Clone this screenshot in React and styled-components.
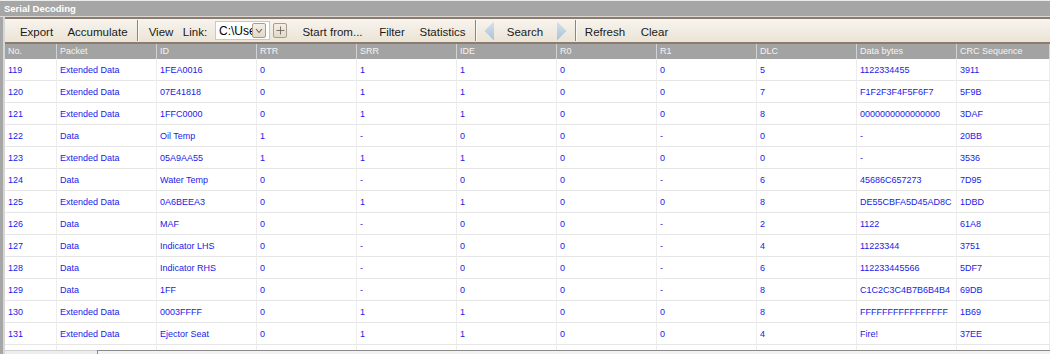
import React from 'react';
import styled, { createGlobalStyle } from 'styled-components';

const GlobalStyle = createGlobalStyle`
  html, body { margin: 0; padding: 0; }
  body { background: #a8a8a8; font-family: "Liberation Sans", Arial, sans-serif; }
`

const Frame = styled.div`
  width: 1050px;
  height: 354px;
  display: flex;
  flex-direction: column;
  overflow: hidden;
  background: #a6a6a6;
  border-top: 1px solid #ececec;
  box-sizing: border-box;
`

const TitleBar = styled.div`
  height: 15px;
  flex: none;
  display: flex;
  align-items: center;
  padding-left: 4px;
  color: #fff;
  font-size: 9.5px;
  font-weight: bold;
  border-bottom: 1px solid #dcd8d4;
`

const Panel = styled.div`
  flex: 1;
  display: flex;
  flex-direction: column;
  margin-left: 3px;
  border-left: 2px solid #d6d6d6;
  background: #fff;
  min-height: 0;
`

const Toolbar = styled.div`
  height: 23px;
  flex: none;
  display: flex;
  align-items: center;
  padding-left: 8px;
  border-top: 2px solid #8c7c70;
  border-bottom: 2px solid #8c7c70;
  background: linear-gradient(#f7f4ee, #ebe4d6);
  font-size: 11.5px;
  color: #1a1a1a;
`

const ToolButton = styled.div`
  width: ${p => p.$w}px;
  margin-left: ${p => p.$ml || 0}px;
  padding-top: 2px;
  flex: none;
  text-align: center;
  white-space: nowrap;
`

const Sep = styled.div`
  width: 1px;
  height: 21px;
  flex: none;
  margin-left: ${p => p.$ml || 0}px;
  background: #8d8579;
  border-right: 1px solid #fbf9f4;
`

const Combo = styled.div`
  width: 55px;
  height: 19px;
  margin-left: 5px;
  flex: none;
  box-sizing: border-box;
  display: flex;
  align-items: center;
  background: #fff;
  border: 1px solid #cfc7b8;
  font-size: 12px;
  color: #000;
  overflow: hidden;
`

const ComboText = styled.span`
  flex: 1;
  padding-left: 3px;
  padding-top: 1px;
  white-space: nowrap;
  overflow: hidden;
`

const SmallBtn = styled.div`
  width: 14px;
  height: 15px;
  flex: none;
  margin-left: ${p => p.$ml || 0}px;
  margin-right: ${p => p.$mr || 0}px;
  box-sizing: border-box;
  display: flex;
  align-items: center;
  justify-content: center;
  border: 1px solid #a99d8e;
  border-radius: 2px;
  background: linear-gradient(#f4efe6, #e2d9c8);
`

const Arrow = styled.svg`
  flex: none;
  margin-left: ${p => p.$ml || 0}px;
`

const Grid = styled.div`
  display: grid;
  grid-template-columns: 52px repeat(9, 100px) 1fr;
`

const HeaderRow = styled(Grid)`
  height: 15px;
  flex: none;
  background: #a3a3a3;
`

const HeadCell = styled.div`
  font-size: 9px;
  color: #f4f4f4;
  padding-left: 3px;
  line-height: 15px;
  border-right: 1px solid #d2d2d2;
  white-space: nowrap;
  overflow: hidden;
`

const Body = styled.div`
  flex: 1;
  overflow: hidden;
  min-height: 0;
`

const Row = styled(Grid)`
  height: 22px;
`

const Cell = styled.div`
  font-size: 9px;
  color: #1a1ae8;
  padding-left: 3px;
  line-height: 22px;
  border-right: 1px solid #ededed;
  border-bottom: 1px solid #e6e6e6;
  white-space: nowrap;
  overflow: hidden;
`

const ScrollTrack = styled.div`
  height: 3px;
  flex: none;
  display: flex;
  background: #ededed;
  border-top: 1px solid #cfcfcf;
`

const ScrollThumb = styled.div`
  flex: 1;
  margin-left: 92px;
  margin-top: -1px;
  border-top: 1px solid #8a8a8a;
  border-left: 1px solid #8a8a8a;
  background: #f2f2f2;
`

const columns = ['No.', 'Packet', 'ID', 'RTR', 'SRR', 'IDE', 'R0', 'R1', 'DLC', 'Data bytes', 'CRC Sequence'];

const rows = [
  ['119', 'Extended Data', '1FEA0016', '0', '1', '1', '0', '0', '5', '1122334455', '3911'],
  ['120', 'Extended Data', '07E41818', '0', '1', '1', '0', '0', '7', 'F1F2F3F4F5F6F7', '5F9B'],
  ['121', 'Extended Data', '1FFC0000', '0', '1', '1', '0', '0', '8', '0000000000000000', '3DAF'],
  ['122', 'Data', 'Oil Temp', '1', '-', '0', '0', '-', '0', '-', '20BB'],
  ['123', 'Extended Data', '05A9AA55', '1', '1', '1', '0', '0', '0', '-', '3536'],
  ['124', 'Data', 'Water Temp', '0', '-', '0', '0', '-', '6', '45686C657273', '7D95'],
  ['125', 'Extended Data', '0A6BEEA3', '0', '1', '1', '0', '0', '8', 'DE55CBFA5D45AD8C', '1DBD'],
  ['126', 'Data', 'MAF', '0', '-', '0', '0', '-', '2', '1122', '61A8'],
  ['127', 'Data', 'Indicator LHS', '0', '-', '0', '0', '-', '4', '11223344', '3751'],
  ['128', 'Data', 'Indicator RHS', '0', '-', '0', '0', '-', '6', '112233445566', '5DF7'],
  ['129', 'Data', '1FF', '0', '-', '0', '0', '-', '8', 'C1C2C3C4B7B6B4B4', '69DB'],
  ['130', 'Extended Data', '0003FFFF', '0', '1', '1', '0', '0', '8', 'FFFFFFFFFFFFFFFF', '1B69'],
  ['131', 'Extended Data', 'Ejector Seat', '0', '1', '1', '0', '0', '4', 'Fire!', '37EE'],
  ['', '', '', '', '', '', '', '', '', '', ''],
];

const App = () => {
  return (
    <>
      <GlobalStyle />
      <Frame>
        <TitleBar>Serial Decoding</TitleBar>
        <Panel>
          <Toolbar>
            <ToolButton $w={47}>Export</ToolButton>
            <ToolButton $w={75}>Accumulate</ToolButton>
            <Sep $ml={2} />
            <ToolButton $w={38} $ml={3}>View</ToolButton>
            <ToolButton $w={30}>Link:</ToolButton>
            <Combo>
              <ComboText>C:\Users\Public</ComboText>
              <SmallBtn $mr={3}>
                <svg width="8" height="6" viewBox="0 0 8 6">
                  <polyline points="1,1 4,4.5 7,1" fill="none" stroke="#6e665c" strokeWidth="1.1" />
                </svg>
              </SmallBtn>
            </Combo>
            <SmallBtn $ml={3}>
              <svg width="9" height="9" viewBox="0 0 9 9">
                <path d="M4.5 0.5 V8.5 M0.5 4.5 H8.5" stroke="#7a7268" strokeWidth="1" />
              </svg>
            </SmallBtn>
            <ToolButton $w={75} $ml={8}>Start from...</ToolButton>
            <ToolButton $w={44}>Filter</ToolButton>
            <ToolButton $w={57}>Statistics</ToolButton>
            <Sep $ml={4} />
            <Arrow $ml={7} width="10" height="20" viewBox="0 0 10 20">
              <defs>
                <linearGradient id="ag" x1="0" y1="0" x2="0" y2="1">
                  <stop offset="0" stopColor="#d4e2ee" />
                  <stop offset="1" stopColor="#a9c1d8" />
                </linearGradient>
              </defs>
              <polygon points="10,0.5 0.5,10 10,19.5" fill="url(#ag)" />
            </Arrow>
            <ToolButton $w={62}>Search</ToolButton>
            <Arrow $ml={1} width="10" height="20" viewBox="0 0 10 20">
              <polygon points="0,0.5 9.5,10 0,19.5" fill="url(#ag)" />
            </Arrow>
            <Sep $ml={8} />
            <ToolButton $w={56}>Refresh</ToolButton>
            <ToolButton $w={43}>Clear</ToolButton>
          </Toolbar>
          <HeaderRow>
            {columns.map(c => <HeadCell key={c}>{c}</HeadCell>)}
          </HeaderRow>
          <Body>
            {rows.map((r, i) => (
              <Row key={i}>
                {r.map((v, j) => <Cell key={j}>{v}</Cell>)}
              </Row>
            ))}
          </Body>
          <ScrollTrack>
            <ScrollThumb />
          </ScrollTrack>
        </Panel>
      </Frame>
    </>
  );
};

export default App;
